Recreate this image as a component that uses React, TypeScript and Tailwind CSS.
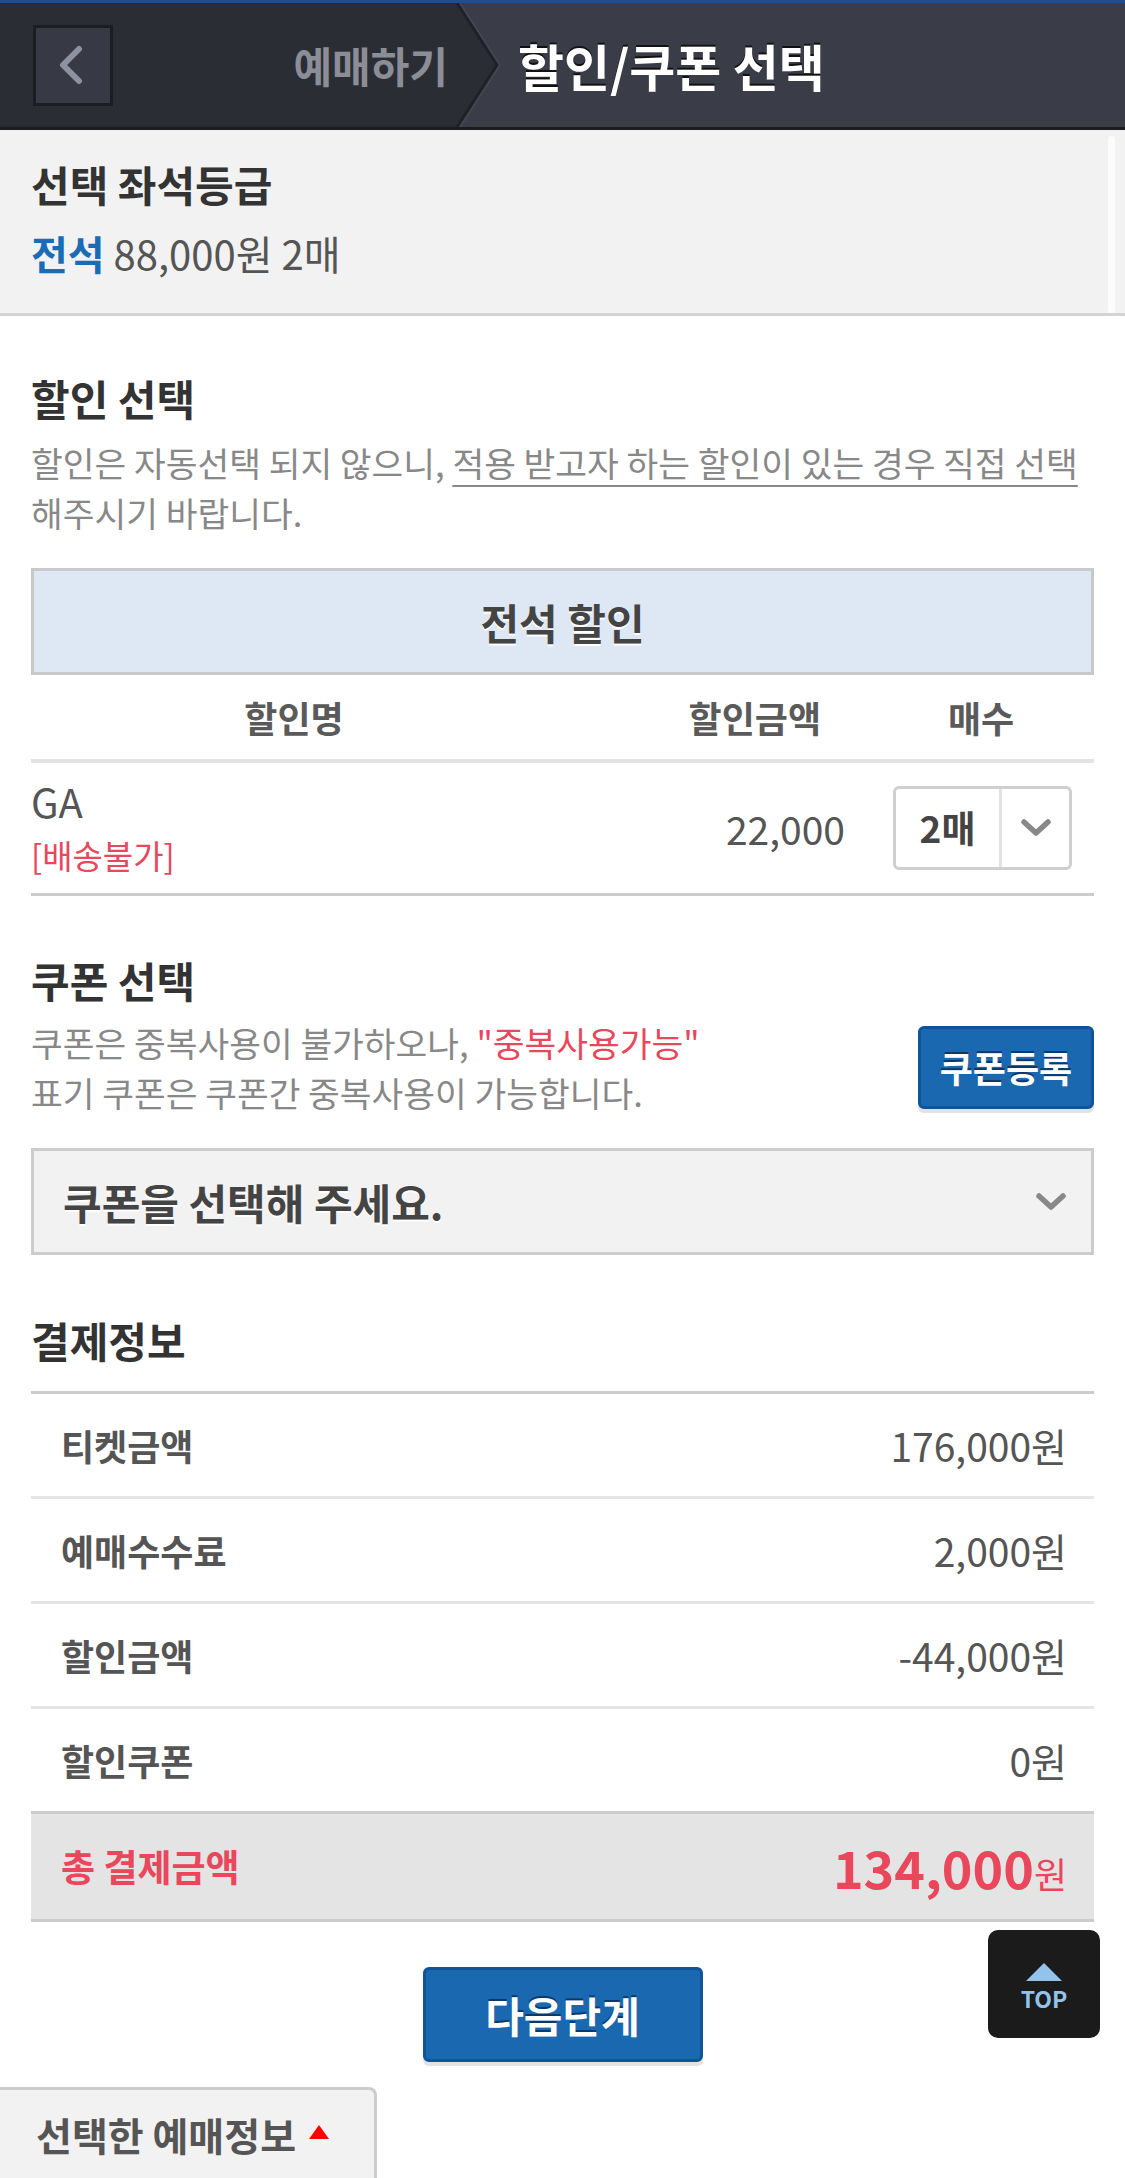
import React from "react";

const Chevron = ({ color = "#888" }: { color?: string }) => (
  <svg width="32" height="20" viewBox="0 0 32 20" fill="none">
    <path d="M4 4 L16 15 L28 4" stroke={color} strokeWidth="5.5" strokeLinecap="round" strokeLinejoin="round" />
  </svg>
);

const payRows = [
  { label: "티켓금액", value: "176,000원" },
  { label: "예매수수료", value: "2,000원" },
  { label: "할인금액", value: "-44,000원" },
  { label: "할인쿠폰", value: "0원" },
];

export default function App() {
  return (
    <div className="relative h-[2178px] w-[1125px] overflow-hidden bg-white font-['Noto_Sans_CJK_KR',sans-serif]">
      {/* top line */}
      <div className="h-[3px] bg-[#1d4f8f]" />

      {/* header */}
      <header className="flex h-[127px] border-b-[3px] border-[#1b1c21] bg-[#3a3c47]">
        <div className="flex w-[455px] shrink-0 items-center justify-between bg-[#2b2d35] pl-[33px] pr-[7px]">
          <button className="flex h-[81px] w-[80px] items-center justify-center border-[3px] border-[#1c1d22] bg-[#373a44] pr-[4px]">
            <svg width="26" height="40" viewBox="0 0 26 40" fill="none">
              <path d="M21 4 L5 20 L21 36" stroke="#8e929e" strokeWidth="6" strokeLinecap="round" strokeLinejoin="round" />
            </svg>
          </button>
          <span className="text-[42px] font-bold leading-none text-[#8b8e97]">예매하기</span>
        </div>
        <svg width="45" height="124" viewBox="0 0 45 124" className="shrink-0">
          <polygon points="0,0 2,0 42,62 2,124 0,124" fill="#2b2d35" />
          <polyline points="2,0 42,62 2,124" stroke="#1f2127" strokeWidth="3" fill="none" />
          <polyline points="5,0 45,62 5,124" stroke="#454854" strokeWidth="1.5" fill="none" />
        </svg>
        <div className="flex flex-1 items-center pl-[18px]">
          <h1 className="text-[50px] font-bold leading-none text-white [text-shadow:0_-2px_0_#111]">
            할인/쿠폰 선택
          </h1>
        </div>
      </header>

      {/* 선택 좌석등급 */}
      <section className="relative border-b-[3px] border-[#d4d4d4] bg-[#f2f2f2] px-[31px] pb-[36px] pt-[30px]">
        <h2 className="text-[42px] font-bold leading-[48px] text-[#333]">선택 좌석등급</h2>
        <p className="mt-[21px] text-[40px] leading-[48px] text-[#555]">
          <span className="font-bold text-[#1b6bb5]">전석</span> 88,000원 2매
        </p>
        <div className="absolute right-[10px] top-[6px] h-[177px] w-[7px] rounded-full bg-white/80" />
      </section>

      <main className="px-[31px] pt-[58px]">
        {/* 할인 선택 */}
        <h2 className="text-[42px] font-bold leading-[48px] text-[#333]">할인 선택</h2>
        <p className="mt-[15px] text-[34.5px] leading-[50px] text-[#888]">
          <span className="whitespace-nowrap">
            할인은 자동선택 되지 않으니,{" "}
            <span className="underline decoration-[#888] decoration-2 underline-offset-[8px]">
              적용 받고자 하는 할인이 있는 경우 직접 선택
            </span>
          </span>
          <br />
          해주시기 바랍니다.
        </p>

        <div className="mt-[31px] flex h-[107px] items-center justify-center border-[3px] border-[#c9c9c9] bg-[#dde8f4]">
          <span className="text-[42px] font-bold text-[#444] [text-shadow:0_2px_0_#fff]">전석 할인</span>
        </div>

        <div className="flex h-[88px] items-center border-b-[4px] border-[#e3e3e3] text-[36px] font-bold text-[#5a5a5a]">
          <div className="w-[526px] text-center">할인명</div>
          <div className="w-[264px] text-right">할인금액</div>
          <div className="w-[273px] pl-[47px] text-center">매수</div>
        </div>

        <div className="flex h-[133px] items-center border-b-[3px] border-[#cccccc] pr-[22px]">
          <div className="flex-1">
            <div className="text-[40px] leading-[54px] text-[#555]">GA</div>
            <div className="text-[33px] leading-[54px] text-[#e8475c]">[배송불가]</div>
          </div>
          <div className="text-[39px] text-[#555]">22,000</div>
          <div className="ml-[48px] flex h-[84px] w-[179px] rounded-[6px] border-[3px] border-[#cfcfcf] bg-white">
            <div className="flex w-[106px] items-center justify-center border-r-[3px] border-[#e3e3e3] text-[37px] font-bold text-[#444]">
              2매
            </div>
            <div className="flex flex-1 items-center justify-center">
              <Chevron />
            </div>
          </div>
        </div>

        {/* 쿠폰 선택 */}
        <h2 className="mt-[60px] text-[42px] font-bold leading-[48px] text-[#333]">쿠폰 선택</h2>
        <div className="mt-[13px] flex items-center justify-between">
          <p className="text-[34.5px] leading-[50px] text-[#888]">
            쿠폰은 중복사용이 불가하오나, <span className="text-[#e8475c]">"중복사용가능"</span>
            <br />
            표기 쿠폰은 쿠폰간 중복사용이 가능합니다.
          </p>
          <button className="h-[83px] w-[176px] shrink-0 rounded-[6px] border-[3px] border-[#0f5499] bg-[#1a68b0] text-[36px] font-bold text-white shadow-[0_4px_0_#e2e2e2] [text-shadow:0_-2px_0_#0a3a6c]">
            쿠폰등록
          </button>
        </div>

        <div className="mt-[31px] flex h-[107px] items-center justify-between border-[3px] border-[#cccccc] bg-[#f2f2f2] pl-[29px] pr-[24px]">
          <span className="text-[42px] font-bold text-[#444] [text-shadow:0_2px_0_#fff]">쿠폰을 선택해 주세요.</span>
          <Chevron />
        </div>

        {/* 결제정보 */}
        <h2 className="mt-[61px] text-[42px] font-bold leading-[48px] text-[#333]">결제정보</h2>
        <div className="mt-[27px] border-t-[3px] border-[#cccccc]">
          {payRows.map((row, i) => (
            <div
              key={row.label}
              className={
                i < 3
                  ? "flex h-[105px] items-center justify-between border-b-[3px] border-[#e5e5e5] pl-[30px] pr-[27px]"
                  : "flex h-[102px] items-center justify-between pl-[30px] pr-[27px]"
              }
            >
              <span className="text-[36px] font-bold text-[#555]">{row.label}</span>
              <span className="text-[39px] text-[#555]">{row.value}</span>
            </div>
          ))}
          <div className="flex h-[111px] items-center justify-between border-y-[3px] border-[#cccccc] bg-[#e4e4e4] pl-[30px] pr-[27px] text-[#e8475c]">
            <span className="text-[37px] font-bold">총 결제금액</span>
            <span className="flex items-baseline">
              <span className="text-[52px] font-bold leading-none">134,000</span>
              <span className="text-[36px] leading-none">원</span>
            </span>
          </div>
        </div>

        <button className="mx-auto mt-[45px] flex h-[95px] w-[280px] items-center justify-center rounded-[6px] border-[3px] border-[#0f5499] bg-[#1a68b0] text-[42px] font-bold text-white shadow-[0_4px_0_#e2e2e2] [text-shadow:0_-2px_0_#0a3a6c]">
          다음단계
        </button>
      </main>

      {/* TOP button */}
      <button className="absolute left-[988px] top-[1930px] flex h-[108px] w-[112px] flex-col items-center rounded-[10px] bg-[#1b1b1b] pt-[32px]">
        <svg width="38" height="20" viewBox="0 0 38 20">
          <polygon points="19,1 37,19 1,19" fill="#93c3eb" />
        </svg>
        <span className="mt-[3px] text-[23px] font-bold leading-[26px] text-[#93c3eb]">TOP</span>
      </button>

      {/* bottom tab */}
      <div className="absolute bottom-0 left-0 flex h-[91px] w-[377px] items-center rounded-tr-[8px] border-r-[3px] border-t-[3px] border-[#cccccc] bg-[#f2f2f2] pl-[36px]">
        <span className="text-[39px] font-bold text-[#555]">선택한 예매정보</span>
        <svg width="22" height="16" viewBox="0 0 22 16" className="ml-[12px] mt-[-4px]">
          <polygon points="11,1 21,15 1,15" fill="#ff0000" />
        </svg>
      </div>
    </div>
  );
}
